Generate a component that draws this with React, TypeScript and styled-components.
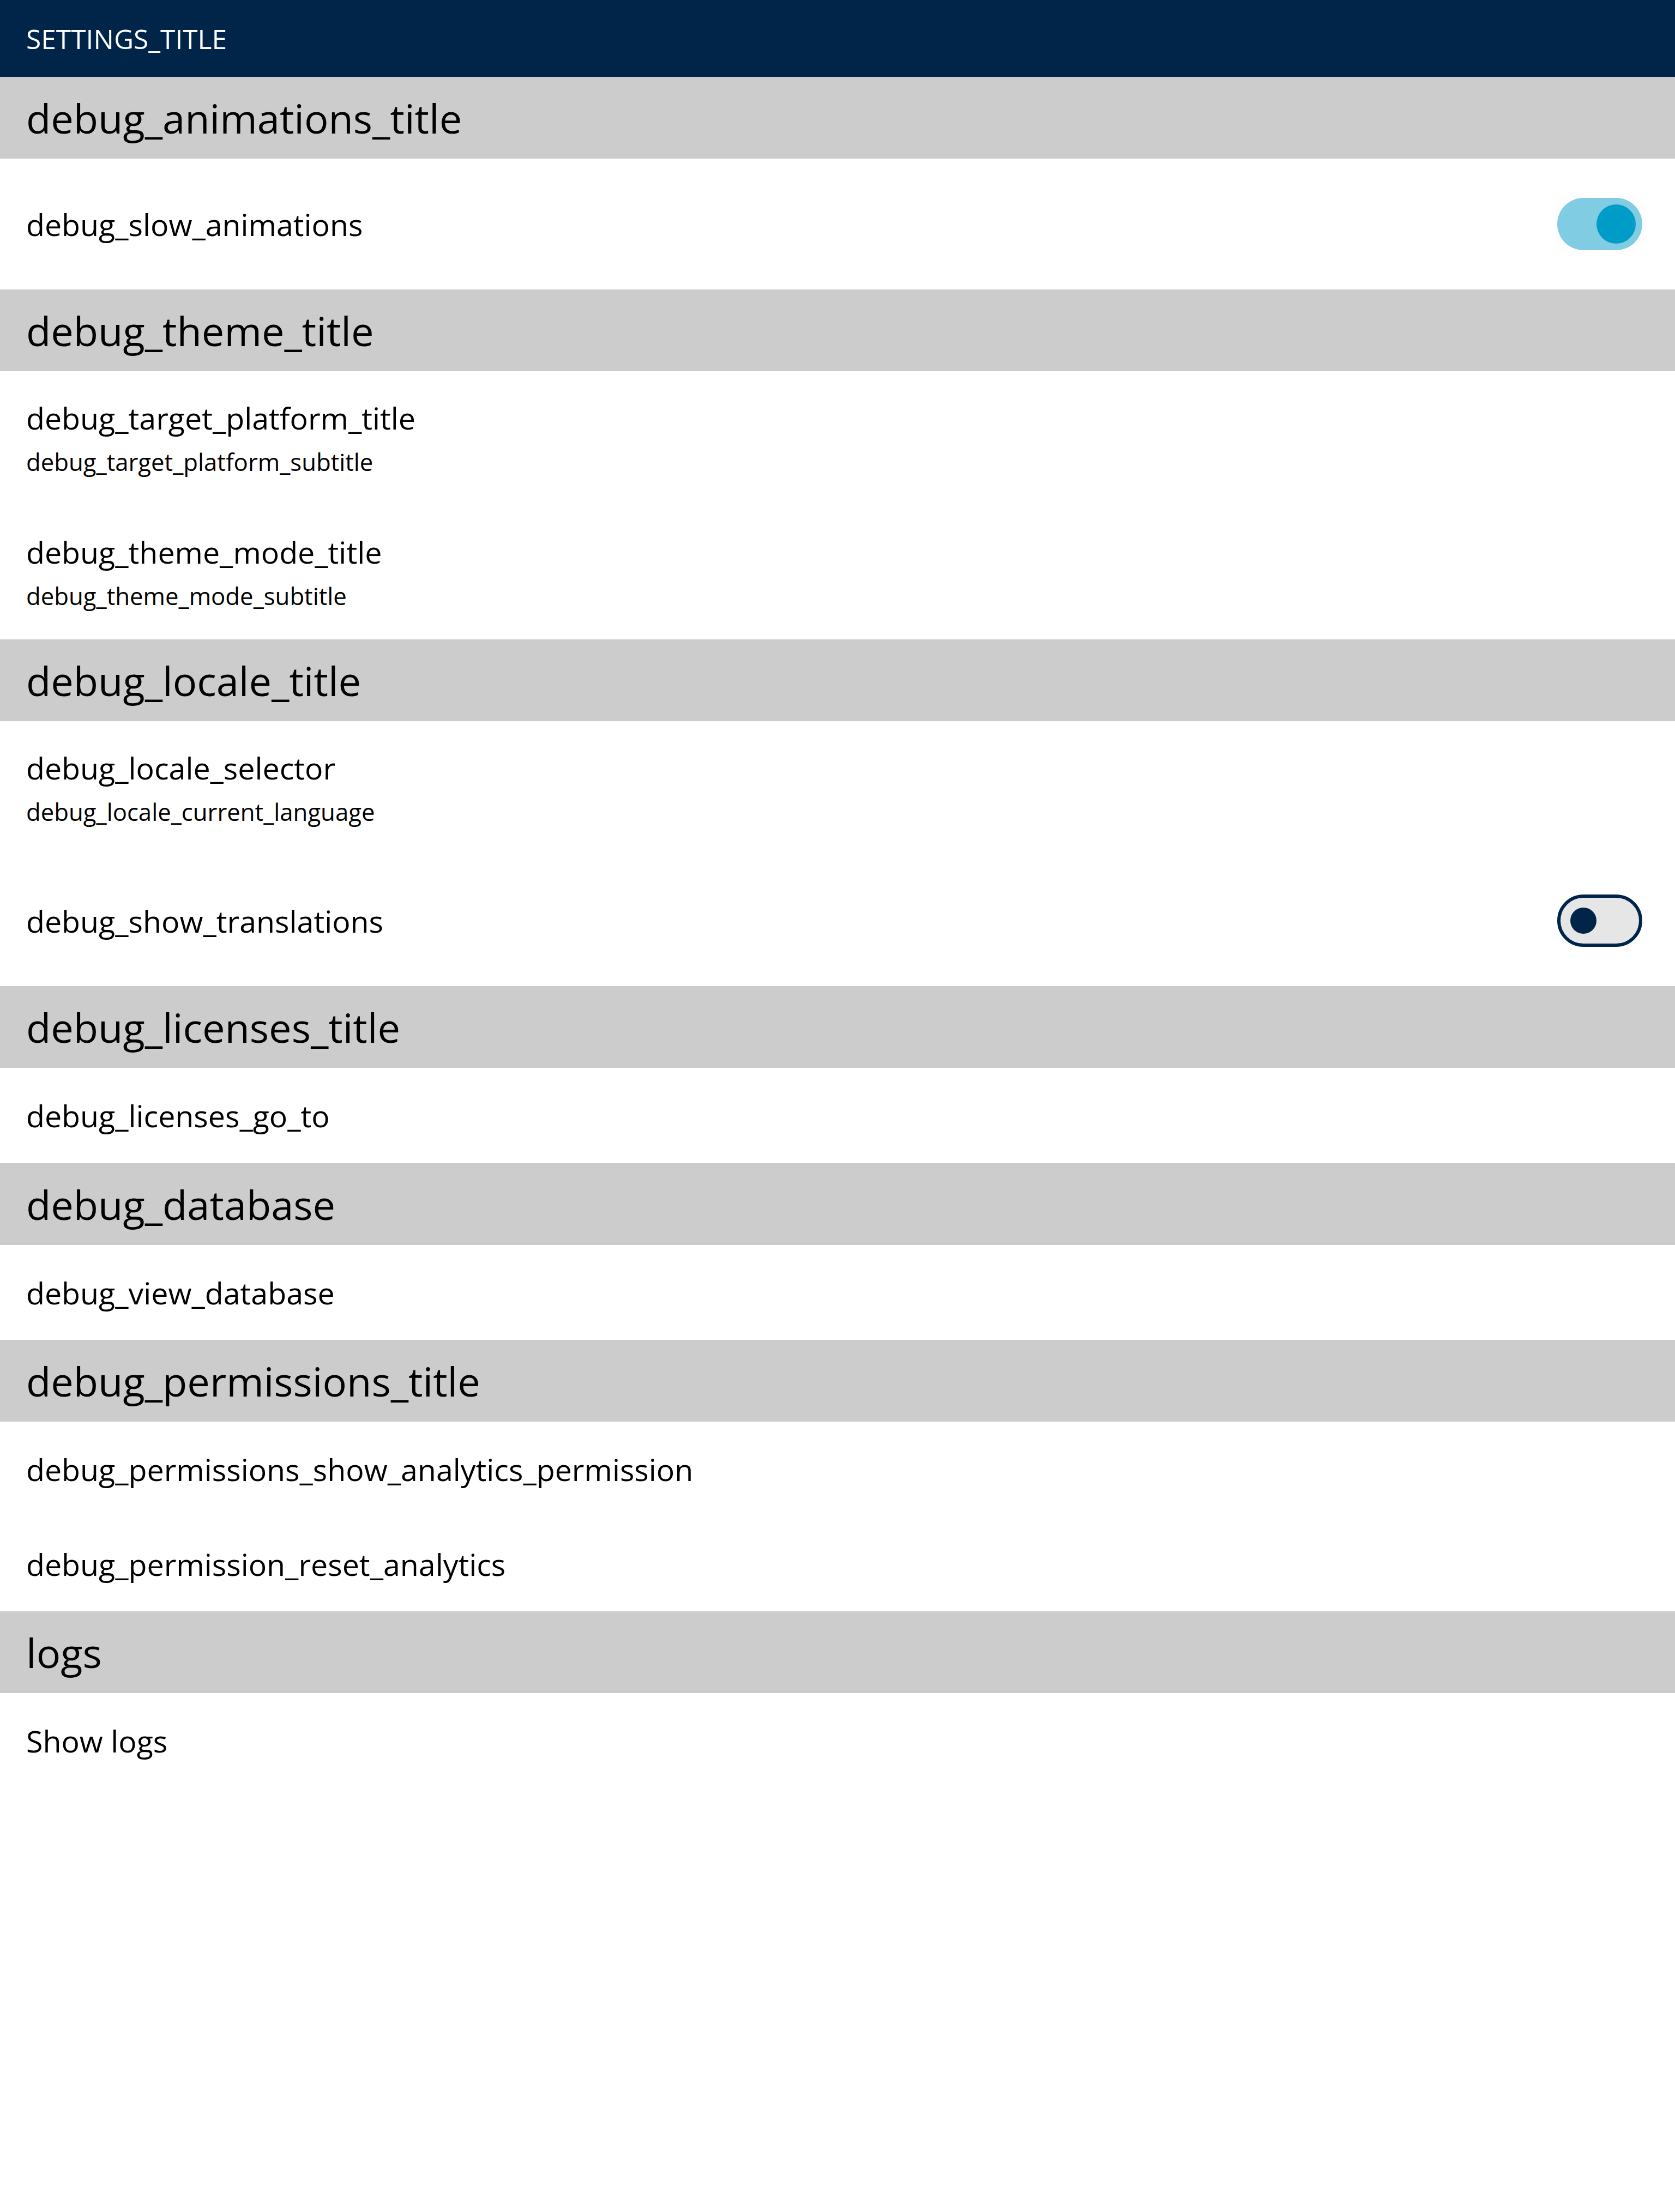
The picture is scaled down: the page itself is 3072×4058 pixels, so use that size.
import React from "react";
import styled, { createGlobalStyle } from "styled-components";

const GlobalStyle = createGlobalStyle`
  html, body {
    margin: 0;
    padding: 0;
    background: #ffffff;
  }
  body {
    font-family: "Open Sans", "Noto Sans", sans-serif;
    color: #000000;
  }
  * { box-sizing: border-box; }
`;

const Page = styled.div`
  display: flex;
  flex-direction: column;
  width: 100%;
  min-height: 4058px;
  background: #ffffff;
`;

const AppBar = styled.header`
  height: 141px;
  display: flex;
  align-items: center;
  padding: 0 48px;
  background: #012549;
  color: #ffffff;
  font-size: 49.7px;
`;

const SectionHeader = styled.div`
  height: 150px;
  display: flex;
  align-items: center;
  padding: 0 48px;
  background: #cccccc;
  font-size: 74px;
  color: #000000;
`;

const Row = styled.div<{ $height: number }>`
  height: ${(p) => p.$height}px;
  display: flex;
  align-items: center;
  justify-content: space-between;
  padding: 0 60px 0 48px;
  font-size: 55.5px;
  color: #000000;
`;

const TwoLineRow = styled.div`
  height: 246px;
  display: flex;
  flex-direction: column;
  padding: 50px 48px 0 48px;
`;

const Title = styled.div`
  font-size: 55.5px;
  line-height: 72px;
`;

const Subtitle = styled.div`
  font-size: 43.7px;
  line-height: 88px;
`;

const SwitchTrack = styled.div<{ $on: boolean }>`
  position: relative;
  width: 156px;
  height: 96px;
  border-radius: 48px;
  flex-shrink: 0;
  background: ${(p) => (p.$on ? "#80cce3" : "#e6e6e6")};
  border: ${(p) => (p.$on ? "none" : "6px solid #012549")};
`;

const SwitchThumb = styled.div<{ $on: boolean }>`
  position: absolute;
  top: 50%;
  transform: translateY(-50%);
  border-radius: 50%;
  width: ${(p) => (p.$on ? 72 : 48)}px;
  height: ${(p) => (p.$on ? 72 : 48)}px;
  background: ${(p) => (p.$on ? "#009cc8" : "#012549")};
  ${(p) => (p.$on ? "right: 12px;" : "left: 18px;")}
`;

const Switch = ({ on }: { on: boolean }) => (
  <SwitchTrack $on={on} role="switch" aria-checked={on}>
    <SwitchThumb $on={on} />
  </SwitchTrack>
);

export default function App() {
  return (
    <>
      <GlobalStyle />
      <Page>
        <AppBar>SETTINGS_TITLE</AppBar>

        <SectionHeader>debug_animations_title</SectionHeader>
        <Row $height={240}>
          <span>debug_slow_animations</span>
          <Switch on={true} />
        </Row>

        <SectionHeader>debug_theme_title</SectionHeader>
        <TwoLineRow>
          <Title>debug_target_platform_title</Title>
          <Subtitle>debug_target_platform_subtitle</Subtitle>
        </TwoLineRow>
        <TwoLineRow>
          <Title>debug_theme_mode_title</Title>
          <Subtitle>debug_theme_mode_subtitle</Subtitle>
        </TwoLineRow>

        <SectionHeader>debug_locale_title</SectionHeader>
        <TwoLineRow>
          <Title>debug_locale_selector</Title>
          <Subtitle>debug_locale_current_language</Subtitle>
        </TwoLineRow>
        <Row $height={240}>
          <span>debug_show_translations</span>
          <Switch on={false} />
        </Row>

        <SectionHeader>debug_licenses_title</SectionHeader>
        <Row $height={175}>
          <span>debug_licenses_go_to</span>
        </Row>

        <SectionHeader>debug_database</SectionHeader>
        <Row $height={174}>
          <span>debug_view_database</span>
        </Row>

        <SectionHeader>debug_permissions_title</SectionHeader>
        <Row $height={174}>
          <span>debug_permissions_show_analytics_permission</span>
        </Row>
        <Row $height={174}>
          <span>debug_permission_reset_analytics</span>
        </Row>

        <SectionHeader>logs</SectionHeader>
        <Row $height={174}>
          <span>Show logs</span>
        </Row>
      </Page>
    </>
  );
}
